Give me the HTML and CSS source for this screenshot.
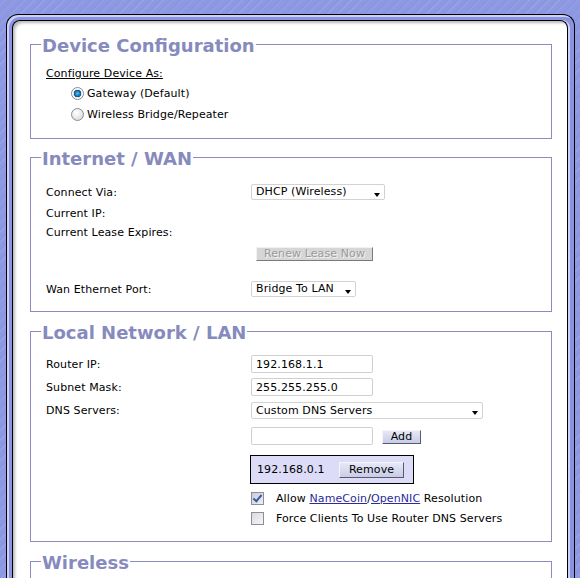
FILE: index.html
```html
<!DOCTYPE html>
<html lang="en">
<head>
<meta charset="utf-8">
<title>Router Setup</title>
<link rel="stylesheet" href="styles.css">
</head>
<body>
<div class="frame">
  <div class="panel">

    <fieldset class="fs fs-first">
      <legend>Device Configuration</legend>
      <div class="caption">Configure Device As:</div>
      <label class="radio-row"><input class="radio" type="radio" name="mode" checked><span>Gateway (Default)</span></label>
      <label class="radio-row"><input class="radio" type="radio" name="mode"><span>Wireless Bridge/Repeater</span></label>
    </fieldset>

    <fieldset class="fs fs-wan">
      <legend>Internet / WAN</legend>
      <div class="row r-connect">
        <span class="lbl">Connect Via:</span>
        <span class="sel w-connect"><select><option>DHCP (Wireless)</option></select></span>
      </div>
      <div class="row r-ip"><span class="lbl">Current IP:</span></div>
      <div class="row r-lease"><span class="lbl">Current Lease Expires:</span></div>
      <div class="row r-renew">
        <span class="lbl"></span>
        <button class="btn btn-renew" disabled>Renew Lease Now</button>
      </div>
      <div class="row r-port">
        <span class="lbl">Wan Ethernet Port:</span>
        <span class="sel w-port"><select><option>Bridge To LAN</option></select></span>
      </div>
    </fieldset>

    <fieldset class="fs fs-lan">
      <legend>Local Network / LAN</legend>
      <div class="row r-router">
        <span class="lbl">Router IP:</span>
        <input class="txt" type="text" value="192.168.1.1">
      </div>
      <div class="row r-subnet">
        <span class="lbl">Subnet Mask:</span>
        <input class="txt" type="text" value="255.255.255.0">
      </div>
      <div class="row r-dns">
        <span class="lbl">DNS Servers:</span>
        <span class="sel w-dns"><select><option>Custom DNS Servers</option></select></span>
      </div>
      <div class="row r-add">
        <span class="lbl"></span>
        <input class="txt" type="text" value="">
        <button class="btn btn-add">Add</button>
      </div>
      <div class="row r-box">
        <div class="dnsbox">
          <span class="dns-ip">192.168.0.1</span>
          <button class="btn btn-remove">Remove</button>
        </div>
      </div>
      <label class="row r-cb r-cb1">
        <span class="lbl"></span>
        <input class="cb" type="checkbox" checked>
        <span class="cb-text">Allow <a href="#">NameCoin</a>/<a href="#">OpenNIC</a> Resolution</span>
      </label>
      <label class="row r-cb r-cb2">
        <span class="lbl"></span>
        <input class="cb" type="checkbox">
        <span class="cb-text">Force Clients To Use Router DNS Servers</span>
      </label>
    </fieldset>

    <fieldset class="fs fs-wifi">
      <legend>Wireless</legend>
    </fieldset>

  </div>
</div>
</body>
</html>
```

FILE: styles.css
```css
html, body {
  margin: 0;
  padding: 0;
  overflow: hidden;
}

body {
  height: 578px;
  font-family: "DejaVu Sans", Verdana, sans-serif;
  font-size: 11px;
  letter-spacing: 0.1px;
  color: #000;
  background-color: #8d98e2;
  background-image: repeating-linear-gradient(135deg, #8c97e1 0, #8c97e1 3px, #97a2e7 3px, #97a2e7 4px, #8e99e2 4px, #8e99e2 7px);
}

.frame {
  margin: 14px 5px 0 6px;
  padding: 5px 6px 0 5px;
  border: 1px solid #000;
  border-bottom: none;
  border-radius: 12px 12px 0 0;
  background: #8a92e2;
  box-shadow: inset 2px 2px 0 #cdd1f7;
  height: 700px;
}

.panel {
  border: 1px solid #000;
  border-bottom: none;
  border-radius: 8px 8px 0 0;
  background: #fff;
  padding: 12px 15px 40px 17px;
  height: 700px;
  box-shadow: 2px 0 0 #cdd1f7, inset 3px 3px 3px -1px rgba(0, 0, 0, 0.28);
}

.fs {
  margin: 0 0 8px 0;
  padding: 0 0 0 15px;
  border: 1px solid #8a8dbe;
  min-inline-size: 0;
}

.fs legend {
  margin-left: -5px;
  padding: 3px 1px 0 1px;
  font-family: "DejaVu Sans", Verdana, sans-serif;
  font-weight: bold;
  font-size: 18px;
  line-height: 19px;
  letter-spacing: 0;
  color: #868abd;
}

.fs-first {
  padding-top: 10px;
  padding-bottom: 13px;
  margin-bottom: 7px;
}

.fs-wan {
  padding-top: 13px;
  padding-bottom: 11px;
}

.fs-lan {
  padding-top: 13px;
  padding-bottom: 16px;
}

.fs-wifi {
  height: 120px;
}

.caption {
  height: 18px;
  line-height: 18px;
  text-decoration: underline;
}

.radio-row {
  display: flex;
  align-items: center;
  height: 21px;
  padding-left: 25px;
  gap: 3px;
}

.radio {
  appearance: none;
  -webkit-appearance: none;
  margin: 0;
  width: 13px;
  height: 13px;
  border-radius: 50%;
  border: 1px solid #8c8c8c;
  background: radial-gradient(circle at 40% 35%, #ffffff 0, #eeeeee 40%, #cfcfcf 100%);
  flex: none;
}

.radio:checked {
  background: radial-gradient(circle at 50% 50%, #5ec0f0 0, #1f86c8 2px, #0b4f86 3.5px, #dfe4ea 4px, #ffffff 5px, #d8d8d8 100%);
}

.row {
  display: flex;
  align-items: center;
  height: 22px;
}

.lbl {
  width: 205px;
  flex: none;
}

.r-ip { height: 20px; }
.r-lease { height: 18px; }
.r-renew { height: 25px; }
.r-port { margin-top: 12px; }

.r-router { height: 18px; }
.r-subnet { height: 18px; margin-top: 5px; }
.r-dns { height: 17px; margin-top: 6px; }
.r-add { height: 18px; margin-top: 8px; }
.r-box { height: 29px; margin-top: 10px; }
.r-cb { height: 13px; }
.r-cb1 { margin-top: 8px; }
.r-cb2 { margin-top: 7px; }

.sel {
  position: relative;
  display: inline-block;
  flex: none;
}

.sel select {
  appearance: none;
  -webkit-appearance: none;
  display: block;
  width: 100%;
  height: 16px;
  margin: 0;
  padding: 0 0 0 4px;
  border: 1px solid #d2d2d2;
  border-radius: 2px;
  background: #fff;
  font-family: "DejaVu Sans", Verdana, sans-serif;
  font-size: 11px;
  letter-spacing: 0.1px;
  line-height: 14px;
  color: #000;
}

.sel::after {
  content: "";
  position: absolute;
  right: 5px;
  top: 9px;
  border-left: 3.5px solid transparent;
  border-right: 3.5px solid transparent;
  border-top: 4px solid #000;
}

.w-connect { width: 134px; }
.w-port { width: 105px; }
.w-dns { width: 232px; }
.w-dns select { height: 17px; }

.txt {
  box-sizing: border-box;
  width: 122px;
  height: 18px;
  margin: 0;
  padding: 0 4px;
  border: 1px solid #cfcfcf;
  border-radius: 2px;
  background: #fff;
  font-family: "DejaVu Sans", Verdana, sans-serif;
  font-size: 11px;
  letter-spacing: 0.1px;
  color: #000;
  flex: none;
}

.btn {
  box-sizing: border-box;
  margin: 0;
  padding: 0;
  border: 1px solid;
  border-color: #f4f4fb #5a5a6a #5a5a6a #f4f4fb;
  background: linear-gradient(#e6e8f6, #c9cce8);
  font-family: "DejaVu Sans", Verdana, sans-serif;
  font-size: 11px;
  letter-spacing: 0.1px;
  line-height: 12px;
  color: #000;
  flex: none;
}

.btn-renew {
  width: 117px;
  height: 14px;
  margin-left: 5px;
  background: #d6d6d6;
  border-color: #f2f2f2 #7a7a7a #7a7a7a #f2f2f2;
  color: #9a9a9a;
  text-shadow: 1px 1px 0 #f4f4f4;
}

.btn-add {
  width: 39px;
  height: 14px;
  margin-left: 9px;
  margin-top: 2px;
}

.btn-remove {
  width: 65px;
  height: 16px;
}

.dnsbox {
  box-sizing: border-box;
  display: flex;
  align-items: center;
  width: 164px;
  height: 29px;
  margin-left: 204px;
  padding-left: 6px;
  border: 1px solid #000;
  background: #dcdcf8;
}

.dns-ip {
  width: 82px;
  flex: none;
}

.cb {
  appearance: none;
  -webkit-appearance: none;
  position: relative;
  margin: 0;
  width: 13px;
  height: 13px;
  border: 1px solid #8e8f94;
  background: linear-gradient(135deg, #d9dadf, #f6f6f8);
  flex: none;
}

.cb:checked {
  background: linear-gradient(135deg, #c9ccd8, #eef0f6);
}

.cb:checked::after {
  content: "";
  position: absolute;
  left: 3px;
  top: 0px;
  width: 3px;
  height: 7px;
  border-right: 2px solid #3f57a6;
  border-bottom: 2px solid #3f57a6;
  transform: rotate(40deg);
}

.cb-text {
  margin-left: 12px;
  white-space: nowrap;
}

.cb-text a {
  color: #2b2b9c;
  text-decoration: underline;
}
```
